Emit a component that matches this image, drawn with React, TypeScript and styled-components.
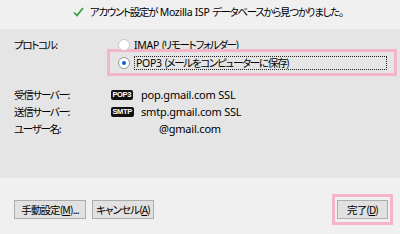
import styled, { createGlobalStyle } from 'styled-components'

const GlobalStyle = createGlobalStyle`
  html, body {
    margin: 0;
    padding: 0;
  }

  body {
    width: 400px;
    height: 234px;
    overflow: hidden;
    background: #f0f0f0;
    font-family: "Noto Sans CJK JP", "Noto Sans", sans-serif;
    font-size: 10.5px;
    font-feature-settings: "palt";
    letter-spacing: -1.3px;
    color: #000;
  }
`

const Window = styled.div`
  display: flex;
  flex-flow: column;
  width: 400px;
  height: 234px;
`

const Notice = styled.div`
  display: flex;
  align-items: center;
  gap: 6px;
  height: 29px;
  padding: 0 0 6px 73px;
  box-sizing: border-box;
`

const Latin = styled.span`
  font-family: "Noto Sans", sans-serif;
  letter-spacing: -0.3px;
  white-space: pre;
`

const Settings = styled.div`
  display: flex;
  flex-flow: column;
  height: 149px;
  padding: 11px 3px 0 14px;
  box-sizing: border-box;
  background: #e5e5e5;
`

const ProtocolGroup = styled.div`
  display: grid;
  grid-template-columns: 93px 1fr;
`

const Label = styled.div`
  line-height: 9px;
  height: 9px;
  display: flex;
  align-items: center;
`

const Options = styled.div`
  display: flex;
  flex-flow: column;
`

const Option = styled.label`
  display: flex;
  align-items: center;
  gap: 4px;
  height: 9px;
  padding-left: 11px;
`

const Highlight = styled.div`
  display: flex;
  align-items: center;
  gap: 4px;
  height: 27px;
  padding: 0 7px 0 8px;
  box-sizing: border-box;
  border: 3px solid #f5b5c9;
`

const Radio = styled.span<{ $checked?: boolean }>`
  position: relative;
  flex: none;
  width: 12px;
  height: 12px;
  box-sizing: border-box;
  border-radius: 50%;
  background: #fff;
  border: 1px solid ${p => (p.$checked ? '#9a9a9a' : '#c8c8c8')};

  &::after {
    content: '';
    display: ${p => (p.$checked ? 'block' : 'none')};
    position: absolute;
    left: 3px;
    top: 3px;
    width: 4px;
    height: 4px;
    border-radius: 50%;
    background: #0a64c8;
  }
`

const Focused = styled.span`
  flex: 1;
  height: 12px;
  line-height: 12px;
  border: 1px dotted #222;
  padding-left: 1px;
`

const Servers = styled.div`
  display: grid;
  grid-template-columns: 97px 1fr;
  grid-auto-rows: 17px;
  align-items: center;
  margin-top: 10px;
`

const Value = styled.div`
  display: flex;
  align-items: center;
`

const BadgeCell = styled.span`
  display: inline-flex;
  width: 30px;
  flex: none;
`

const Badge = styled.span`
  background: #111;
  color: #fff;
  font-family: "Liberation Sans", sans-serif;
  font-weight: bold;
  font-size: 7.5px;
  line-height: 10px;
  letter-spacing: -0.4px;
  padding: 0 2px 0 1.5px;
  border-radius: 2px;
`

const Host = styled.span`
  font-family: "Noto Sans", sans-serif;
  font-size: 11px;
  letter-spacing: -0.2px;
`

const Email = styled(Host)`
  padding-left: 48px;
`

const Footer = styled.div`
  display: flex;
  align-items: flex-start;
  padding: 16px 7px 0 14px;
  flex: 1;
`

const ButtonRow = styled.div`
  display: flex;
  gap: 6px;
  margin-top: 6px;
`

const Button = styled.button<{ $w: number }>`
  width: ${p => p.$w}px;
  height: 19px;
  padding: 0;
  background: #e1e1e1;
  border: 1px solid #adadad;
  font: inherit;
  color: #000;
  letter-spacing: -0.9px;
`

const PrimaryFrame = styled.div`
  margin-left: auto;
  padding: 3px 2px;
  border: 3px solid #f5b5c9;
`

const CheckIcon = () => (
  <svg width="11" height="10" viewBox="0 0 11 10">
    <path d="M1 5.5 L4 8.5 L10 1" fill="none" stroke="#2e9b3c" strokeWidth="1.6" />
  </svg>
)

const App = () => {
  return (
    <Window>
      <GlobalStyle />
      <Notice>
        <CheckIcon />
        <span>アカウント設定が<Latin> Mozilla ISP </Latin>データベースから見つかりました。</span>
      </Notice>

      <Settings>
        <ProtocolGroup>
          <Label>プロトコル:</Label>
          <Options>
            <Option>
              <Radio />
              <span><Latin>IMAP </Latin>(リモートフォルダー)</span>
            </Option>
            <Highlight>
              <Radio $checked />
              <Focused><Latin>POP3 </Latin>(メールをコンピューターに保存)</Focused>
            </Highlight>
          </Options>
        </ProtocolGroup>

        <Servers>
          <div>受信サーバー:</div>
          <Value>
            <BadgeCell><Badge>POP3</Badge></BadgeCell>
            <Host>pop.gmail.com SSL</Host>
          </Value>
          <div>送信サーバー:</div>
          <Value>
            <BadgeCell><Badge>SMTP</Badge></BadgeCell>
            <Host>smtp.gmail.com SSL</Host>
          </Value>
          <div>ユーザー名:</div>
          <Value>
            <Email>@gmail.com</Email>
          </Value>
        </Servers>
      </Settings>

      <Footer>
        <ButtonRow>
          <Button $w={72}>手動設定(<u>M</u>)...</Button>
          <Button $w={62}>キャンセル(<u>A</u>)</Button>
        </ButtonRow>
        <PrimaryFrame>
          <Button $w={51}>完了(<u>D</u>)</Button>
        </PrimaryFrame>
      </Footer>
    </Window>
  )
}

export default App
